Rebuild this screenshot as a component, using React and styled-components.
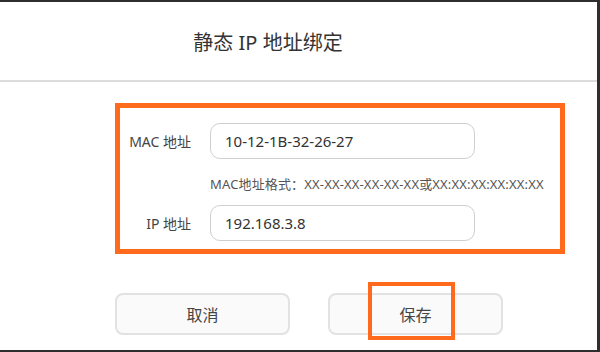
import React from 'react';
import styled, { createGlobalStyle } from 'styled-components';

const GlobalStyle = createGlobalStyle`
  html, body {
    margin: 0;
    padding: 0;
    background: #2e2e2e;
  }
  body {
    font-family: "Noto Sans", "Noto Sans CJK SC", sans-serif;
  }
`;

function Field({ label, value }) {
  return (
    <Row>
      <Label>{label}</Label>
      <Input>{value}</Input>
    </Row>
  );
}

export default function App() {
  return (
    <>
      <GlobalStyle />
      <Frame>
        <Header>
          <Title>静态 IP 地址绑定</Title>
        </Header>
        <Body>
          <Highlight>
            <Field label="MAC 地址" value="10-12-1B-32-26-27" />
            <Hint>MAC地址格式：XX-XX-XX-XX-XX-XX或XX:XX:XX:XX:XX:XX</Hint>
            <Field label="IP 地址" value="192.168.3.8" />
          </Highlight>
          <Actions>
            <Button>取消</Button>
            <Button>
              保存
              <Marker />
            </Button>
          </Actions>
        </Body>
      </Frame>
    </>
  );
}

const Frame = styled.div`
  width: 597px;
  height: 348px;
  margin-top: 2px;
  background: #fff;
  overflow: hidden;
`;

const Header = styled.header`
  display: flex;
  align-items: center;
  justify-content: center;
  height: 78px;
  padding-right: 61px;
  border-bottom: 2px solid #dcdcdc;
`;

const Title = styled.h1`
  margin: 0;
  font-family: "Noto Sans", "Noto Sans CJK SC", sans-serif;
  font-size: 20px;
  font-weight: 400;
  color: #333;
`;

const Body = styled.div`
  padding: 21px 0 0 115px;
`;

const Highlight = styled.div`
  box-sizing: border-box;
  width: 450px;
  border: 5px solid #ff6a1c;
  padding: 15px 0 8px;
`;

const Row = styled.div`
  display: flex;
  align-items: center;
  gap: 19px;
`;

const Label = styled.span`
  width: 71px;
  text-align: right;
  font-size: 14px;
  color: #444;
`;

const Input = styled.div`
  box-sizing: border-box;
  display: flex;
  align-items: center;
  width: 265px;
  height: 36px;
  padding-left: 14px;
  border: 1px solid #cfcfcf;
  border-radius: 10px;
  font-size: 15px;
  color: #333;
`;

const Hint = styled.div`
  margin: 15px 0 11px 90px;
  font-size: 13px;
  line-height: 20px;
  letter-spacing: 0.15px;
  color: #555;
  white-space: nowrap;
`;

const Actions = styled.div`
  display: flex;
  gap: 38px;
  margin-top: 39px;
`;

const Button = styled.div`
  position: relative;
  box-sizing: border-box;
  display: flex;
  align-items: center;
  justify-content: center;
  width: 175px;
  height: 42px;
  border: 2px solid #e2e2e2;
  border-radius: 8px;
  background: #fafafa;
  font-size: 16px;
  color: #444;
`;

const Marker = styled.span`
  position: absolute;
  left: 38px;
  top: -13px;
  box-sizing: border-box;
  width: 87px;
  height: 58px;
  border: 4px solid #ff6a1c;
`;
